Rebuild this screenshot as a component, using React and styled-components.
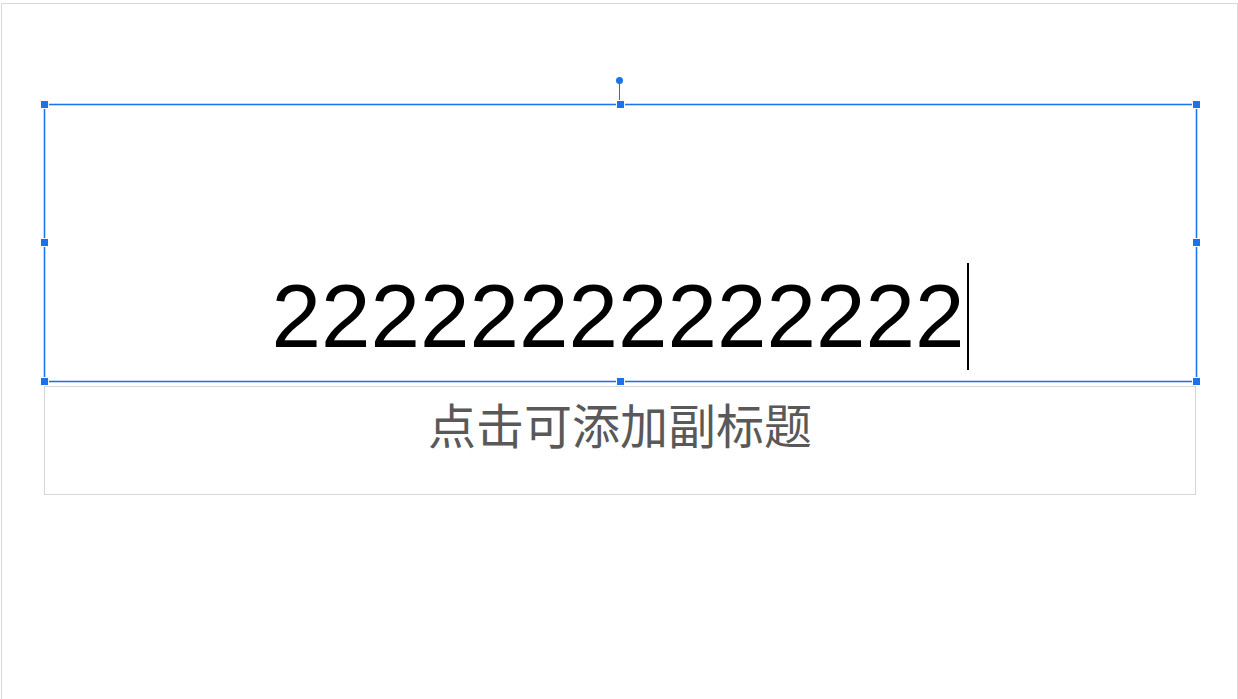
import React from 'react';
import styled, { createGlobalStyle } from "styled-components";

export default function App() {
  return (
    <>
      <GlobalStyle/>
      <Slide>
        <TitleFrame>
          <RotateStalk/>
          <RotateKnob/>
          <Handle $h="start" $v="start"/>
          <Handle $h="mid" $v="start"/>
          <Handle $h="end" $v="start"/>
          <Handle $h="start" $v="mid"/>
          <Handle $h="end" $v="mid"/>
          <Handle $h="start" $v="end"/>
          <Handle $h="mid" $v="end"/>
          <Handle $h="end" $v="end"/>
          <TitleText>22222222222222<Caret/></TitleText>
        </TitleFrame>
        <SubtitleBox>
          <SubtitleText>点击可添加副标题</SubtitleText>
        </SubtitleBox>
      </Slide>
    </>
  )
}

const GlobalStyle = createGlobalStyle`
  html, body {
    margin: 0;
    padding: 0;
    background: #ffffff;
    overflow: hidden;
  }
`;

const Slide = styled('div')`
  box-sizing: border-box;
  margin: 3px 0 0 1px;
  width: 1237px;
  height: 720px;
  border: 1px solid #d9d9d9;
  border-bottom: none;
  padding: 100px 0 0 42px;
  background: #ffffff;
`;

const TitleFrame = styled('div')`
  position: relative;
  box-sizing: border-box;
  width: 1153px;
  height: 278px;
  border: 1px solid #1a73e8;
  box-shadow: 0 0 0 1px #c2d8f9, inset 0 0 0 1px #c2d8f9;
  display: flex;
  align-items: flex-end;
  justify-content: center;
  padding-bottom: 11px;
`;

const spot = {
  start: '-4px',
  mid: 'calc(50% - 4px)',
  end: 'calc(100% - 3px)',
};

const Handle = styled('span')`
  position: absolute;
  left: ${p => spot[p.$h]};
  top: ${p => spot[p.$v]};
  width: 7px;
  height: 7px;
  background: #1a73e8;
  box-shadow: 0 0 0 1px #ffffff;
`;

const RotateStalk = styled('span')`
  position: absolute;
  left: 574px;
  top: -21px;
  width: 1px;
  height: 17px;
  background: #1a73e8;
`;

const RotateKnob = styled('span')`
  position: absolute;
  left: 571px;
  top: -28px;
  width: 7px;
  height: 7px;
  border-radius: 50%;
  background: #1a73e8;
`;

const TitleText = styled('div')`
  font-family: "Liberation Sans", Arial, sans-serif;
  font-size: 89px;
  line-height: 107px;
  color: #000000;
  display: flex;
  align-items: stretch;
  white-space: nowrap;
`;

const Caret = styled('span')`
  display: block;
  width: 2px;
  margin-left: 3px;
  background: #000000;
`;

const SubtitleBox = styled('div')`
  box-sizing: border-box;
  width: 1152px;
  height: 109px;
  margin-top: 4px;
  border: 1px solid #d6d6d6;
  padding-top: 8px;
  text-align: center;
`;

const SubtitleText = styled('div')`
  font-family: "Noto Sans CJK SC", "Noto Sans", sans-serif;
  font-size: 48px;
  line-height: 1.2;
  color: #595959;
`;
